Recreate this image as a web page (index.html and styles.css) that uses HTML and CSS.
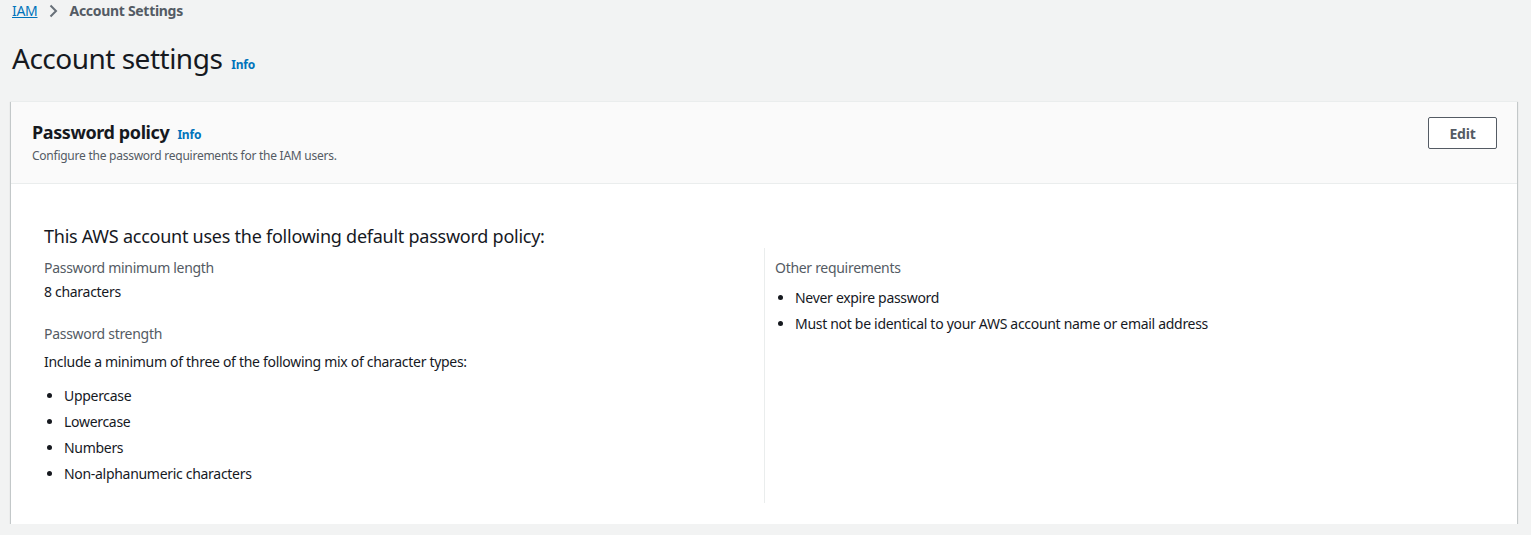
FILE: index.html
```html
<!DOCTYPE html>
<html>
<head>
<meta charset="utf-8">
<link rel="stylesheet" href="styles.css">
</head>
<body>
<div class="page">
  <nav class="breadcrumbs">
    <a class="crumb-link" href="#">IAM</a>
    <svg class="chev" width="16" height="16" viewBox="0 0 16 16"><path d="M5.5 2.5 L11 8 L5.5 13.5" fill="none" stroke="#687078" stroke-width="2"/></svg>
    <span class="crumb-current">Account Settings</span>
  </nav>
  <header class="page-header">
    <h1 class="page-title">Account settings</h1>
    <a class="info" href="#">Info</a>
  </header>
  <section class="card">
    <div class="card-header">
      <div class="card-header-text">
        <div class="card-title-row">
          <h2 class="card-title">Password policy</h2>
          <a class="info" href="#">Info</a>
        </div>
        <p class="card-desc">Configure the password requirements for the IAM users.</p>
      </div>
      <button class="btn">Edit</button>
    </div>
    <div class="card-body">
      <h3 class="policy-heading">This AWS account uses the following default password policy:</h3>
      <div class="columns">
        <div class="col">
          <div class="field">
            <div class="label">Password minimum length</div>
            <div class="value">8 characters</div>
          </div>
          <div class="field">
            <div class="label">Password strength</div>
            <div class="value value-spaced">Include a minimum of three of the following mix of character types:</div>
            <ul class="list">
              <li>Uppercase</li>
              <li>Lowercase</li>
              <li>Numbers</li>
              <li>Non-alphanumeric characters</li>
            </ul>
          </div>
        </div>
        <div class="col col-right">
          <div class="field">
            <div class="label">Other requirements</div>
            <ul class="list list-right">
              <li>Never expire password</li>
              <li>Must not be identical to your AWS account name or email address</li>
            </ul>
          </div>
        </div>
      </div>
    </div>
  </section>
</div>
</body>
</html>
```

FILE: styles.css
```css
* { box-sizing: border-box; }
html, body { margin: 0; padding: 0; }
body {
  background: #f2f3f3;
  font-family: "Noto Sans", "Open Sans", Arial, sans-serif;
  color: #16191f;
  font-size: 14px;
  line-height: 22px;
  letter-spacing: -0.3px;
}
.page {
  padding: 0 14px 0 11px;
}
.breadcrumbs {
  display: flex;
  align-items: center;
  height: 22px;
  padding-left: 1px;
}
.crumb-link {
  color: #0073bb;
  text-decoration: underline;
  font-size: 14px;
}
.chev { margin: 0 9px 0 7px; }
.crumb-current {
  color: #545b64;
  font-weight: 700;
  font-size: 14px;
}
.page-header {
  display: flex;
  align-items: baseline;
  margin-top: 18px;
  padding-left: 1px;
  height: 36px;
}
.page-title {
  margin: 0;
  font-size: 28px;
  line-height: 36px;
  font-weight: 400;
  color: #16191f;
  letter-spacing: -0.5px;
}
.info {
  color: #0073bb;
  font-size: 12px;
  font-weight: 700;
  text-decoration: none;
  margin-left: 9px;
  letter-spacing: -0.2px;
}
.card {
  margin-top: 25px;
  background: #fff;
  box-shadow: 0 1px 1px 0 rgba(0,28,36,0.3), 1px 1px 1px 0 rgba(0,28,36,0.15), -1px 1px 1px 0 rgba(0,28,36,0.15);
  border-top: 1px solid #eaeded;
}
.card-header {
  display: flex;
  justify-content: space-between;
  align-items: flex-start;
  background: #fafafa;
  border-bottom: 1px solid #eaeded;
  padding: 14px 20px 0 21px;
  height: 82px;
}
.card-title-row {
  display: flex;
  align-items: baseline;
}
.card-title {
  margin: 0;
  font-size: 18px;
  line-height: 32px;
  font-weight: 700;
  letter-spacing: -0.4px;
}
.card-title-row .info { margin-left: 8px; }
.card-desc {
  margin: 0;
  font-size: 12px;
  line-height: 16px;
  color: #545b64;
  letter-spacing: -0.25px;
}
.btn {
  margin-top: 1px;
  width: 69px;
  height: 32px;
  background: #fff;
  border: 1px solid #545b64;
  border-radius: 2px;
  color: #545b64;
  font-family: inherit;
  font-size: 14px;
  font-weight: 700;
  letter-spacing: -0.2px;
}
.card-body {
  padding: 40px 32px 21px 33px;
}
.policy-heading {
  margin: 0;
  font-size: 18px;
  line-height: 24px;
  font-weight: 400;
  letter-spacing: -0.25px;
}
.columns {
  display: grid;
  grid-template-columns: 720px 1fr;
}
.col { padding-top: 9px; }
.col-right {
  border-left: 1px solid #eaeded;
  padding-left: 10px;
}
.field { margin-bottom: 20px; }
.field:last-child { margin-bottom: 18px; }
.label {
  color: #545b64;
  margin-bottom: 2px;
}
.value-spaced { margin-top: 6px; }
.list {
  margin: 12px 0 0 0;
  padding-left: 20px;
}
.list li { margin-bottom: 4px; }
.list li:last-child { margin-bottom: 0; }
.list-right { margin-top: 8px; }
```
